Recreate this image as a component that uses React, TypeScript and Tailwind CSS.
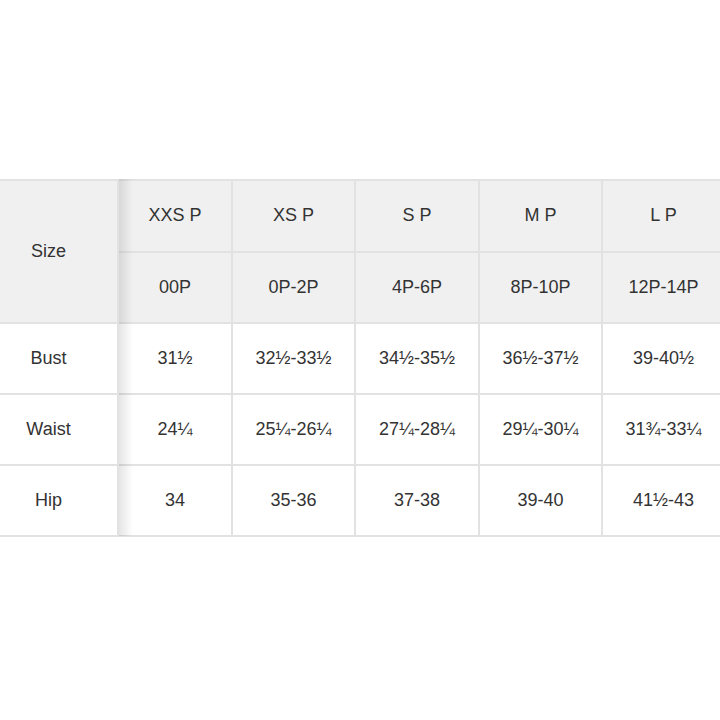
import React from "react";

const sizes = ["XXS P", "XS P", "S P", "M P", "L P"];
const nums = ["00P", "0P-2P", "4P-6P", "8P-10P", "12P-14P"];
const rows: [string, string[]][] = [
  ["Bust", ["31½", "32½-33½", "34½-35½", "36½-37½", "39-40½"]],
  ["Waist", ["24¼", "25¼-26¼", "27¼-28¼", "29¼-30¼", "31¾-33¼"]],
  ["Hip", ["34", "35-36", "37-38", "39-40", "41½-43"]],
];
const widths = [114, 123, 124, 123, 123];

const firstCell =
  "border-2 border-l-0 border-[#e2e2e2] text-center align-middle pr-[20px]";
const cell = "border-2 border-[#e2e2e2] text-center align-middle";

export default function App() {
  return (
    <div
      className="w-[720px] h-[720px] bg-white overflow-hidden pt-[179px] text-[18px] text-[#333]"
      style={{ fontFamily: '"Liberation Sans", Arial, sans-serif' }}
    >
      <div className="relative">
        <table className="border-collapse table-fixed w-[725px]">
          <colgroup>
            <col style={{ width: 118 }} />
            {widths.map((w, i) => (
              <col key={i} style={{ width: w }} />
            ))}
          </colgroup>
          <tbody>
            <tr className="h-[71.5px] bg-[#f0f0f0]">
              <td rowSpan={2} className={firstCell + " bg-[#f0f0f0]"}>
                Size
              </td>
              {sizes.map((s) => (
                <td key={s} className={cell}>
                  {s}
                </td>
              ))}
            </tr>
            <tr className="h-[71.5px] bg-[#f0f0f0]">
              {nums.map((s) => (
                <td key={s} className={cell}>
                  {s}
                </td>
              ))}
            </tr>
            {rows.map(([label, vals]) => (
              <tr key={label} className="h-[71px] bg-white">
                <td className={firstCell + " bg-white"}>{label}</td>
                {vals.map((v, i) => (
                  <td key={i} className={cell}>
                    {v}
                  </td>
                ))}
              </tr>
            ))}
          </tbody>
        </table>
        <div className="absolute left-[119px] top-0 bottom-[1px] w-[14px] bg-gradient-to-r from-[rgba(0,0,0,0.1)] to-transparent pointer-events-none" />
      </div>
    </div>
  );
}
